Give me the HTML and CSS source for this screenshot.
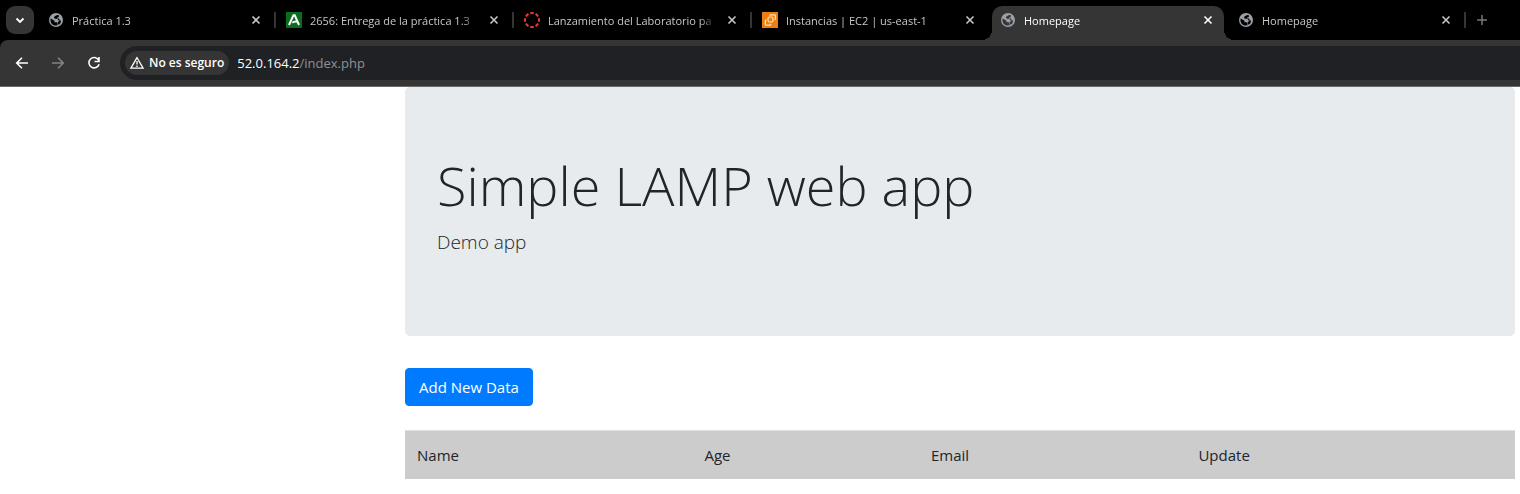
FILE: index.html
```html
<!DOCTYPE html>
<html lang="es">
<head>
<meta charset="utf-8">
<meta name="viewport" content="width=device-width, initial-scale=1">
<title>Homepage</title>
<link rel="stylesheet" href="styles.css">
</head>
<body>
<svg class="sprite" aria-hidden="true">
  <symbol id="globe" viewBox="0 0 16 16">
    <circle cx="8" cy="8" r="7" fill="#9aa0a6"/>
    <path class="globe-land" d="M10.800 3.200C8.500 2.600 8 4.200 6.600 4.500 5.600 5 6 6.800 7.400 6.800h1.800c.8 0 .6 1.700 1.600 1.700H13c.2 2.200-1.200 4.200-3.500 4.700v-1.500c0-.9-.6-1.500-1.500-1.500H6.500V8.800L2.700 6.400C1.800 9.500 3.500 12.600 6.500 13.400c1.200.3 3 .1 4-.6L9.500 10.500 12 8.300 10.800 6.400H9.300V5.200h1.500z"/>
  </symbol>
  <symbol id="cross" viewBox="0 0 16 16">
    <path d="M4.500 4.500l7 7M11.500 4.500l-7 7" fill="none" stroke="currentColor" stroke-width="1.600"/>
  </symbol>
</svg>

<header class="browser">
  <div class="tabstrip">
    <button class="tab-search" aria-label="Buscar pestañas">
      <svg class="icon" viewBox="0 0 16 16"><path d="M4.500 6.500 8 10l3.500-3.500" fill="none" stroke="currentColor" stroke-width="1.800"/></svg>
    </button>
    <div class="tab">
      <svg class="icon"><use href="#globe"/></svg>
      <span class="tab-title">Práctica 1.3</span>
      <button class="close" aria-label="Cerrar"><svg class="icon"><use href="#cross"/></svg></button>
    </div>
    <span class="divider"></span>
    <div class="tab">
      <svg class="icon" viewBox="0 0 16 16"><path fill="#0b6b1f" d="M0 0h16v16H0z"/><path d="M3 13 7.500 3.200h1.200L13 13M6.300 10.700c1.500-1.300 3.200-1.600 5.200-1" fill="none" stroke="#fff" stroke-width="2"/></svg>
      <span class="tab-title">2656: Entrega de la práctica 1.3</span>
      <button class="close" aria-label="Cerrar"><svg class="icon"><use href="#cross"/></svg></button>
    </div>
    <span class="divider"></span>
    <div class="tab">
      <svg class="icon" viewBox="0 0 16 16"><circle cx="8" cy="8" r="7" fill="none" stroke="#e63a2e" stroke-width="2" pathLength="80" stroke-dasharray="6.500 3.500" stroke-dashoffset="3.250"/></svg>
      <span class="tab-title">Lanzamiento del Laboratorio pa</span>
      <button class="close" aria-label="Cerrar"><svg class="icon"><use href="#cross"/></svg></button>
    </div>
    <span class="divider"></span>
    <div class="tab">
      <svg class="icon" viewBox="0 0 16 16"><path fill="#ed7f11" d="M0 0h16v16H0z"/><g fill="none" stroke="#ffe5c4" stroke-width="1.200"><rect x="6" y="5" width="5" height="5" rx="1.500"/><path d="M8 3.800V3.500q0-.7.700-.7h4q.700 0 .7.700v3.500q0 .7-.7.700M4.500 8h-.4q-.7 0-.7.700v3.700q0 .7.700.7h4q.700 0 .7-.7v-.7"/></g></svg>
      <span class="tab-title">Instancias | EC2 | us-east-1</span>
      <button class="close" aria-label="Cerrar"><svg class="icon"><use href="#cross"/></svg></button>
    </div>
    <span class="divider divider-hidden"></span>
    <div class="tab tab-active">
      <svg class="icon"><use href="#globe"/></svg>
      <span class="tab-title">Homepage</span>
      <button class="close" aria-label="Cerrar"><svg class="icon"><use href="#cross"/></svg></button>
    </div>
    <span class="divider divider-hidden"></span>
    <div class="tab">
      <svg class="icon"><use href="#globe"/></svg>
      <span class="tab-title">Homepage</span>
      <button class="close" aria-label="Cerrar"><svg class="icon"><use href="#cross"/></svg></button>
    </div>
    <span class="divider"></span>
    <button class="new-tab" aria-label="Nueva pestaña">
      <svg class="icon" viewBox="0 0 16 16"><path d="M8 3v10M3 8h10" fill="none" stroke="currentColor" stroke-width="1.500"/></svg>
    </button>
  </div>

  <div class="toolbar">
    <nav class="nav">
      <button class="nav-button" aria-label="Atrás"><svg class="icon" viewBox="0 0 16 16"><path d="M14 8H3M8 2.700 2.700 8 8 13.300" fill="none" stroke="currentColor" stroke-width="1.600"/></svg></button>
      <button class="nav-button nav-disabled" aria-label="Adelante"><svg class="icon" viewBox="0 0 16 16"><path d="M2 8h11M8 2.700 13.300 8 8 13.300" fill="none" stroke="currentColor" stroke-width="1.600"/></svg></button>
      <button class="nav-button" aria-label="Recargar"><svg class="icon" viewBox="0 0 16 16"><path d="M12.600 5A5.200 5.200 0 1 0 13.100 9.200M13 2v4.500H8.500" fill="none" stroke="currentColor" stroke-width="1.600"/></svg></button>
    </nav>
    <div class="omnibox">
      <button class="security">
        <svg class="icon" viewBox="0 0 16 16"><path d="M8 2.700 1.900 13.200h12.200z" fill="none" stroke="currentColor" stroke-width="1.300"/><path d="M8 6v3.500M8 10.500V12" fill="none" stroke="currentColor" stroke-width="1.300"/></svg>
        No es seguro
      </button>
      <div class="url"><span class="host">52.0.164.2</span>/index.php</div>
    </div>
  </div>
</header>

<main class="container">
  <section class="jumbotron">
    <h1 class="display">Simple LAMP web app</h1>
    <p class="lead">Demo app</p>
  </section>
  <a class="btn" href="#add">Add New Data</a>
  <table class="table">
    <colgroup><col class="col-name"><col class="col-age"><col class="col-email"><col></colgroup>
    <tbody>
      <tr><td>Name</td><td>Age</td><td>Email</td><td>Update</td></tr>
    </tbody>
  </table>
</main>
</body>
</html>
```
FILE: styles.css
```css
* {
  box-sizing: border-box;
}

body {
  margin: 0;
  background: #fff;
  color: #212529;
  font: 400 15px/24px "Segoe UI", "Open Sans", "Noto Sans", sans-serif;
}

button {
  margin: 0;
  padding: 0;
  border: 0;
  background: none;
  color: inherit;
  font: inherit;
}

.sprite {
  display: none;
}

.icon {
  display: block;
  flex: none;
  width: 16px;
  height: 16px;
}

.browser {
  background: #000;
  border-bottom: 1px solid #6b6968;
}

.tabstrip {
  display: flex;
  align-items: center;
  height: 40px;
  padding-left: 6px;
}

.tab-search {
  display: grid;
  place-items: center;
  flex: none;
  width: 28px;
  height: 28px;
  margin-right: 6px;
  border-radius: 9px;
  background: #353535;
  color: #fff;
}

.tab {
  --tab-color: #000;
  position: relative;
  display: flex;
  align-items: center;
  gap: 8px;
  flex: 0 1 232px;
  min-width: 0;
  height: 34px;
  margin-top: 6px;
  padding: 0 8px 6px;
  color: #c7c7c7;
  font-size: 11px;
  line-height: 16px;
}

.tab-active {
  --tab-color: #353535;
  border-radius: 10px 10px 0 0;
  background: #353535;
  color: #fff;
}

.tab-active::before,
.tab-active::after {
  content: "";
  position: absolute;
  bottom: 0;
  width: 10px;
  height: 10px;
}

.tab-active::before {
  right: 100%;
  background: radial-gradient(circle at 0 0, #000 10px, #353535 10px);
}

.tab-active::after {
  left: 100%;
  background: radial-gradient(circle at 100% 0, #000 10px, #353535 10px);
}

.globe-land {
  fill: var(--tab-color);
}

.tab-title {
  flex: 1;
  padding-top: 2px;
  overflow: hidden;
  white-space: nowrap;
  mask-image: linear-gradient(to left, transparent, #000 16px);
}

.divider {
  flex: none;
  width: 2px;
  height: 16px;
  margin: 0 2px;
  background: #353535;
}

.divider-hidden {
  background: none;
}

.new-tab {
  margin-left: 6px;
  color: #777;
}

.toolbar {
  display: flex;
  align-items: center;
  gap: 12px;
  height: 46px;
  padding-left: 8px;
  border-radius: 8px 0 0;
  background: #353535;
}

.nav {
  display: flex;
  gap: 8px;
}

.nav-button {
  display: grid;
  place-items: center;
  width: 28px;
  height: 28px;
  color: #fff;
}

.nav-disabled {
  color: #848484;
}

.omnibox {
  display: flex;
  align-items: center;
  gap: 8px;
  flex: 1;
  height: 34px;
  padding-left: 5px;
  border-radius: 17px 0 0 17px;
  background: #202124;
}

.security {
  display: flex;
  align-items: center;
  gap: 4px;
  height: 24px;
  padding: 0 5px 0 4px;
  border-radius: 12px;
  background: #353535;
  color: #fff;
  font-size: 12px;
  font-weight: 600;
}

.url {
  color: #8f9194;
  font-size: 13px;
}

.host {
  color: #fff;
}

.container {
  padding: 0 5px 15px 405px;
}

.jumbotron {
  margin-bottom: 32px;
  padding: 64px 32px;
  border-radius: 5px;
  background: #e7ebee;
}

.display {
  margin: 0 0 8px;
  font-size: 54px;
  font-weight: 300;
  line-height: 68px;
}

.lead {
  margin: 0 0 15px;
  font-size: 19px;
  font-weight: 300;
  line-height: 30px;
}

.btn {
  display: inline-block;
  padding: 6px 13px;
  border: 1px solid #007bff;
  border-radius: 4px;
  background: #007bff;
  color: #fff;
  text-decoration: none;
  vertical-align: top;
}

.table {
  width: 100%;
  margin-top: 24px;
  border-collapse: separate;
  border-spacing: 0;
  table-layout: fixed;
}

.table td {
  padding: 12px;
  border-top: 1px solid #dee2e6;
  background: #ccc;
}

.col-name {
  width: 25.9%;
}

.col-age {
  width: 20.4%;
}

.col-email {
  width: 24.1%;
}
```
